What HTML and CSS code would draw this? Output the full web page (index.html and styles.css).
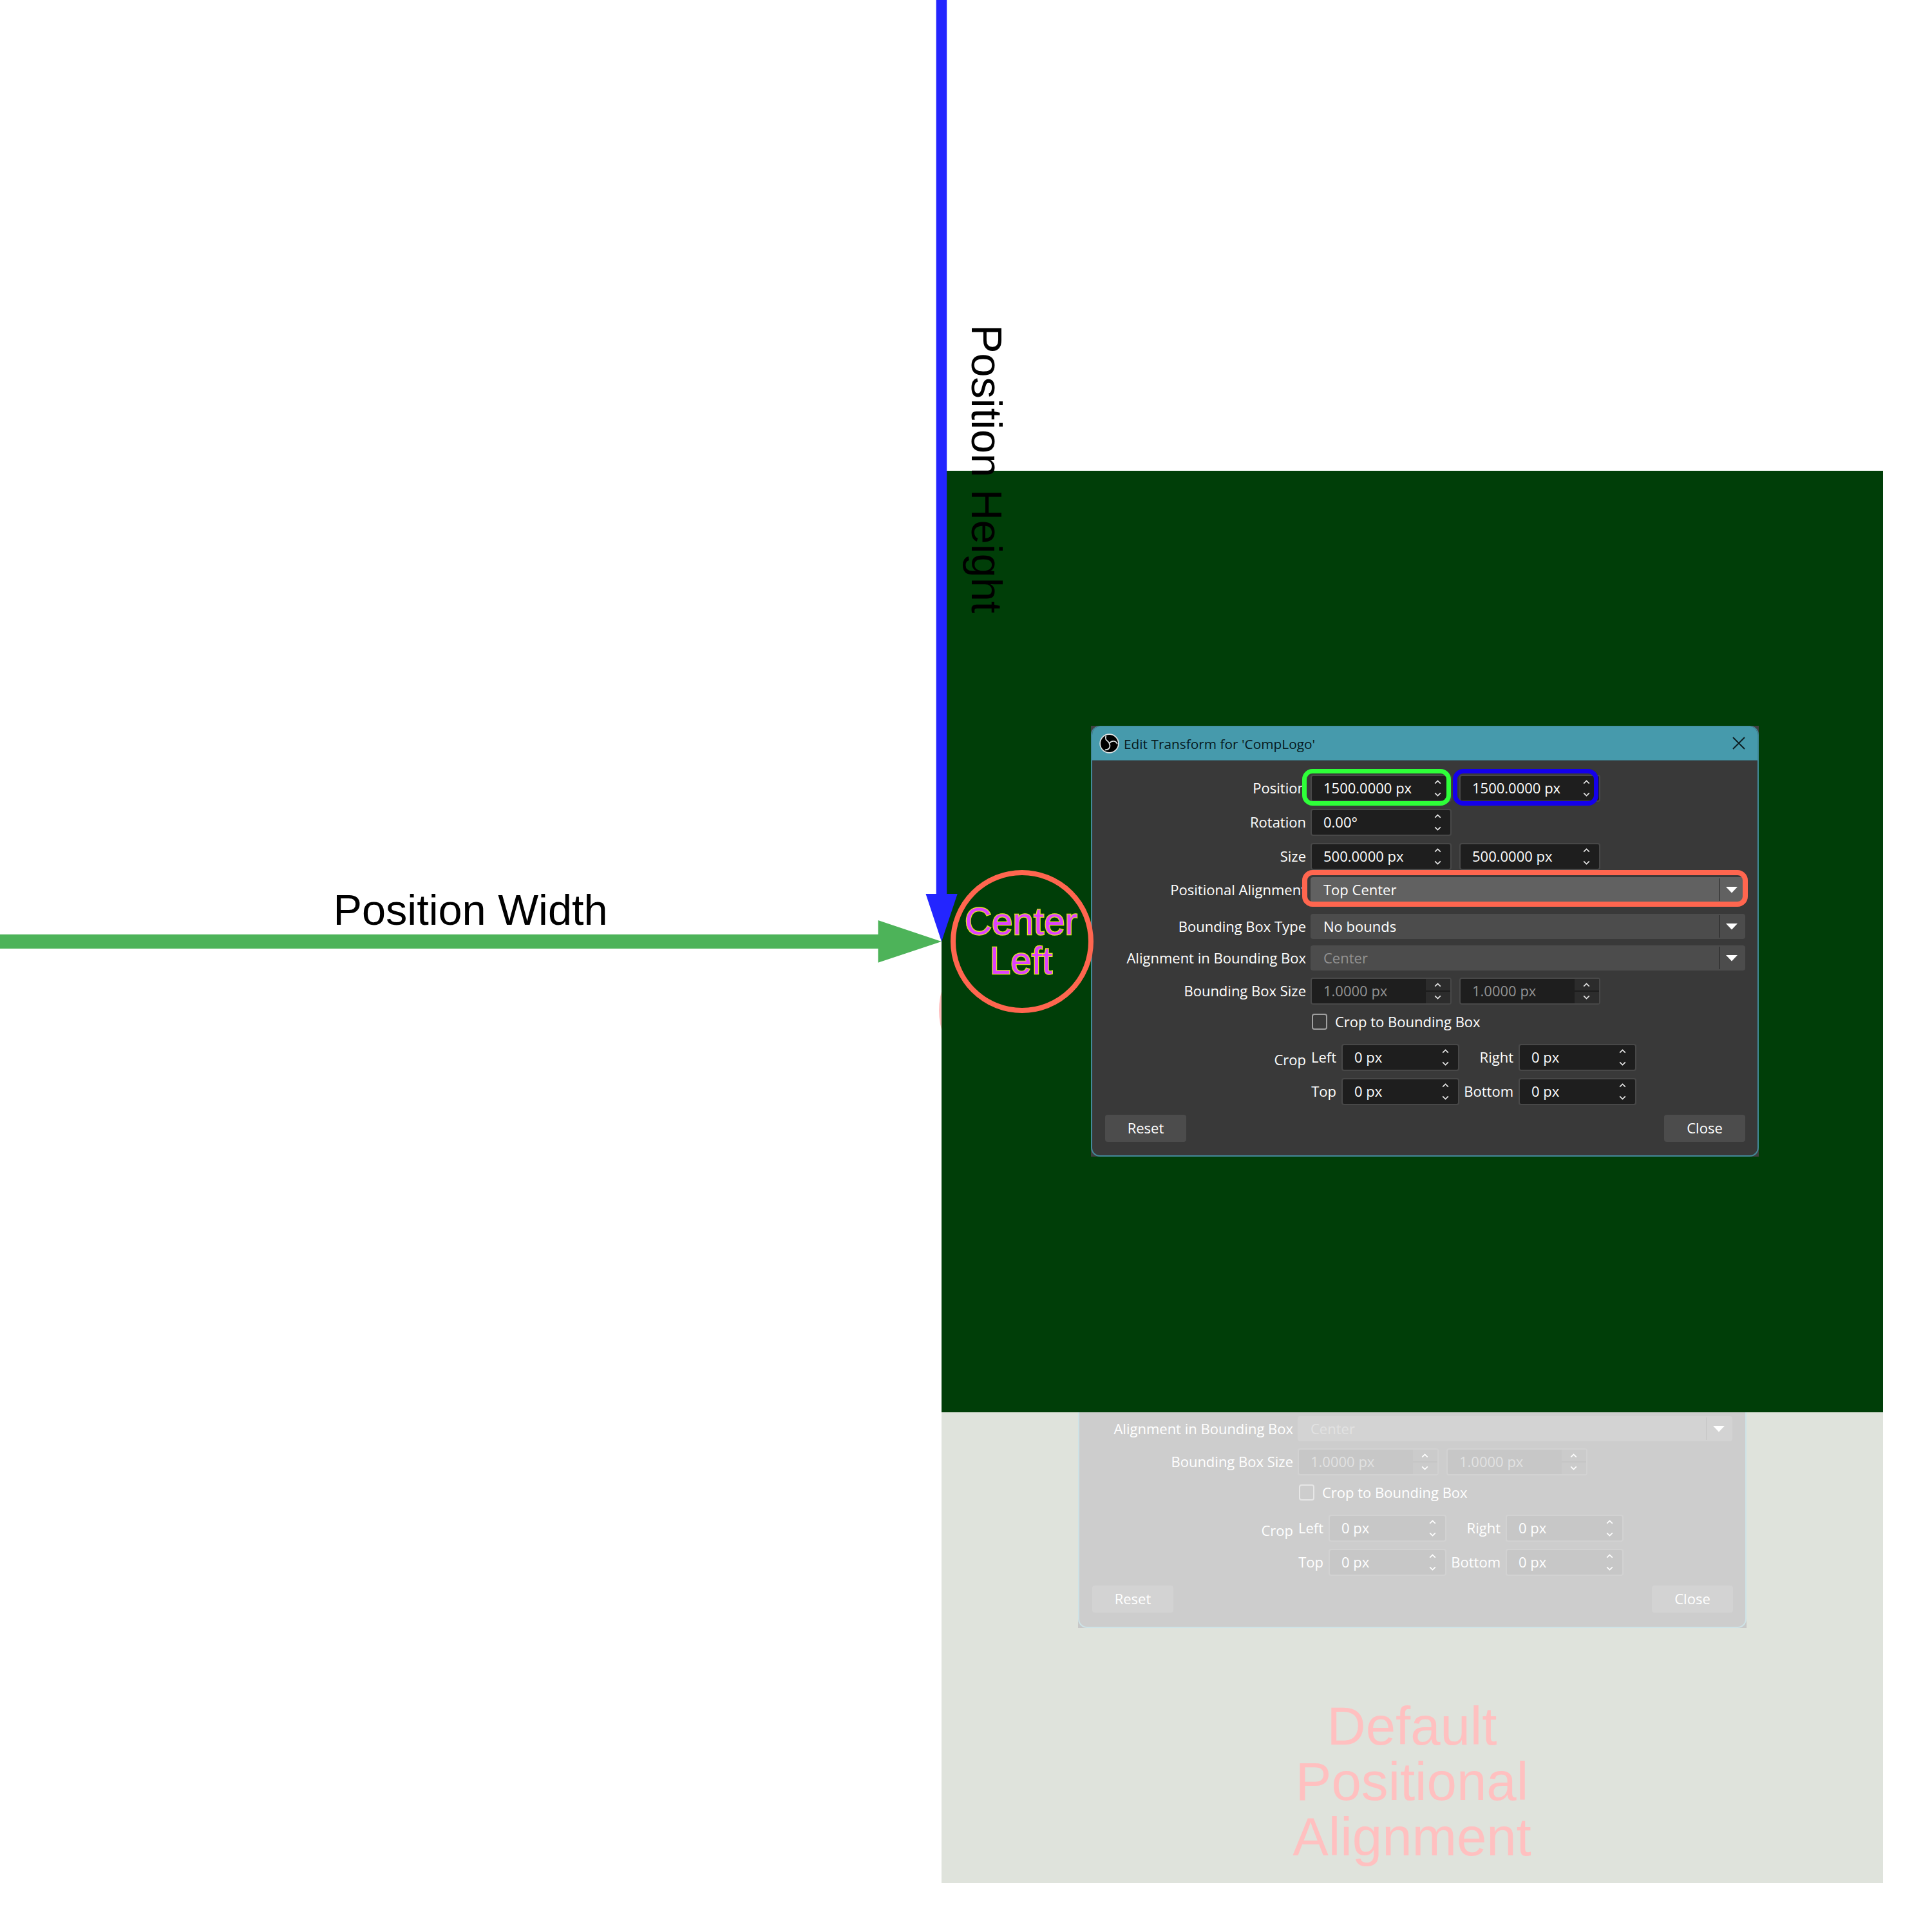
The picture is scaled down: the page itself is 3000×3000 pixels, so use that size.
FILE: index.html
```html
<!DOCTYPE html>
<html lang="en">
<head>
<meta charset="utf-8">
<title>Edit Transform: Center Left</title>
<link rel="stylesheet" href="styles.css">
</head>
<body>
<svg class="symbols" width="0" height="0" aria-hidden="true">
  <symbol id="spin" viewBox="0 0 10 26">
    <path d="M0.7 5.6 5 1.4 9.3 5.6M0.7 20.4 5 24.6 9.3 20.4" fill="none" stroke="currentColor" stroke-width="1.7"/>
  </symbol>
  <symbol id="drop" viewBox="0 0 18 10">
    <path d="M0 0H18L9 9.5Z" fill="#fff"/>
  </symbol>
</svg>
<main class="canvas">
  <div class="ring ring-faint"></div>

  <section class="panel panel-faint">
    <div class="shell shell-faint">
      <div class="dialog dialog-faint">
        <div class="form">
          <div class="row row-box-align"><span class="label">Alignment in Bounding Box</span><span class="combo off">Center<svg class="drop"><use href="#drop"/></svg></span></div>
          <div class="row row-box-size"><span class="label">Bounding Box Size</span><span class="field off">1.0000 px<i class="steps"></i><svg class="spin"><use href="#spin"/></svg></span><span class="field off">1.0000 px<i class="steps"></i><svg class="spin"><use href="#spin"/></svg></span></div>
          <div class="row row-check"><span class="label"></span><span class="check"></span><span class="check-text">Crop to Bounding Box</span></div>
          <div class="row row-crop"><span class="label low">Crop</span><span class="side">Left</span><span class="field small">0 px<svg class="spin"><use href="#spin"/></svg></span><span class="side wide">Right</span><span class="field small">0 px<svg class="spin"><use href="#spin"/></svg></span></div>
          <div class="row"><span class="label"></span><span class="side">Top</span><span class="field small">0 px<svg class="spin"><use href="#spin"/></svg></span><span class="side wide">Bottom</span><span class="field small">0 px<svg class="spin"><use href="#spin"/></svg></span></div>
          <div class="buttons"><span class="button">Reset</span><span class="button">Close</span></div>
        </div>
      </div>
    </div>
    <p class="default-text">Default<br>Positional<br>Alignment</p>
  </section>

  <section class="panel panel-main"></section>

  <div class="shell shell-main">
    <div class="dialog">
      <header class="titlebar">
        <svg class="logo" viewBox="-15 -15 30 30">
          <circle r="13.9" fill="#000" stroke="#dfe3e4" stroke-width="1.6"/>
          <path d="M0 0C-1 -4.5 -7.5 -4 -5 -11.5M0 0C3.5 -5 10 -4.500 12 1M0 0C2.500 5 -.5 10 -6.500 9.500" fill="none" stroke="#dfe3e4" stroke-width="1.7"/>
        </svg>
        <span class="title">Edit Transform for 'CompLogo'</span>
        <svg class="close" viewBox="0 0 20 20"><path d="M1 1 19 19M19 1 1 19" stroke="#0c1a1e" stroke-width="1.8"/></svg>
      </header>
      <div class="form">
        <div class="row row-position"><span class="label">Position</span><span class="field">1500.0000 px<svg class="spin"><use href="#spin"/></svg></span><span class="field">1500.0000 px<svg class="spin"><use href="#spin"/></svg></span></div>
        <div class="row"><span class="label">Rotation</span><span class="field">0.00°<svg class="spin"><use href="#spin"/></svg></span></div>
        <div class="row"><span class="label">Size</span><span class="field">500.0000 px<svg class="spin"><use href="#spin"/></svg></span><span class="field">500.0000 px<svg class="spin"><use href="#spin"/></svg></span></div>
        <div class="row row-align"><span class="label">Positional Alignment</span><span class="combo hover">Top Center<svg class="drop"><use href="#drop"/></svg></span></div>
        <div class="row row-box-type"><span class="label">Bounding Box Type</span><span class="combo">No bounds<svg class="drop"><use href="#drop"/></svg></span></div>
        <div class="row row-box-align"><span class="label">Alignment in Bounding Box</span><span class="combo off">Center<svg class="drop"><use href="#drop"/></svg></span></div>
        <div class="row row-box-size"><span class="label">Bounding Box Size</span><span class="field off">1.0000 px<i class="steps"></i><svg class="spin"><use href="#spin"/></svg></span><span class="field off">1.0000 px<i class="steps"></i><svg class="spin"><use href="#spin"/></svg></span></div>
        <div class="row row-check"><span class="label"></span><span class="check"></span><span class="check-text">Crop to Bounding Box</span></div>
        <div class="row row-crop"><span class="label low">Crop</span><span class="side">Left</span><span class="field small">0 px<svg class="spin"><use href="#spin"/></svg></span><span class="side wide">Right</span><span class="field small">0 px<svg class="spin"><use href="#spin"/></svg></span></div>
        <div class="row"><span class="label"></span><span class="side">Top</span><span class="field small">0 px<svg class="spin"><use href="#spin"/></svg></span><span class="side wide">Bottom</span><span class="field small">0 px<svg class="spin"><use href="#spin"/></svg></span></div>
        <div class="buttons"><span class="button">Reset</span><span class="button">Close</span></div>
      </div>
    </div>
  </div>

  <div class="mark mark-x"></div>
  <div class="mark mark-y"></div>
  <div class="mark mark-align"></div>

  <svg class="arrows" viewBox="0 0 3000 3000">
    <path d="M0 1451H1363.500V1429L1462 1462 1363.500 1494.700V1473H0Z" fill="#4db359"/>
    <path d="M1453.700 0H1470.200V1388H1486.700L1462 1462 1437.500 1388H1453.700Z" fill="#2325ff"/>
    <g class="arrow-text">
      <text x="517.500" y="1436">Position Width</text>
      <text transform="translate(1508.800 504) rotate(90)">Position Height</text>
    </g>
    <g class="ring-text">
      <text x="1585.500" y="1451">Center</text>
      <text x="1585.500" y="1511.500">Left</text>
    </g>
  </svg>
  <div class="ring ring-main"></div>
</main>
</body>
</html>
```
FILE: styles.css
```css
* { box-sizing: border-box; }
body { margin: 0; background: #fff; }
.symbols { position: absolute; }
.canvas {
  position: relative;
  width: 3000px;
  height: 3000px;
  overflow: hidden;
  background: #fff;
  font-family: "Open Sans", "Noto Sans", sans-serif;
}

/* Squares on the canvas */
.panel { position: absolute; left: 1462px; width: 1462px; }
.panel-main { top: 731px; height: 1462px; background: #003e08; }
.panel-faint { top: 2193px; height: 731px; background: #dfe3dc; }
.default-text {
  position: absolute;
  left: 0;
  top: 445px;
  width: 1461px;
  margin: 0;
  text-align: center;
  color: #ffc0c0;
  font: 83.33px/86.2px "Liberation Sans", Arial, sans-serif;
}

/* Rings */
.ring { position: absolute; width: 222px; height: 222px; border-radius: 50%; }
.ring-main { left: 1476px; top: 1351px; border: 8px solid #ff664f; }
.ring-faint { left: 1458px; top: 1458px; border: 8px solid #ffc0c0; }

/* Dialog window */
.shell { position: absolute; width: 1037px; background: #404040; }
.shell-main { left: 1694px; top: 1127px; height: 669px; }
.shell-faint { left: 212px; top: 0; width: 1038px; height: 335px; background: #c8c8c8; }
.dialog {
  height: 100%;
  border: 2px solid #43899a;
  border-top-width: 1px;
  border-radius: 14px;
  overflow: hidden;
  background: #393939;
  color: #fff;
  font-size: 22px;
  line-height: 30px;
  white-space: nowrap;
}
.titlebar {
  display: flex;
  align-items: center;
  height: 53px;
  padding: 0 19px 0 11px;
  background: #469aac;
  border-bottom: 1px solid #3c7481;
}
.logo { width: 31px; height: 31px; }
.title { margin-left: 7px; padding-top: 2px; color: #06191d; font-size: 20.85px; }
.close { width: 20px; height: 20px; margin-left: auto; }

/* Form */
.form { display: flex; flex-direction: column; padding: 0 19px 0 20px; }
.row { display: flex; height: 42px; margin-top: 11px; }
.row-position { margin-top: 22px; }
.row-align, .row-box-type, .row-box-align { height: 39px; }
.row-box-type { margin-top: 18px; }
.row-box-align { margin-top: 10px; }
.row-check { height: 25px; margin-top: 14px; align-items: center; }
.row-crop { margin-top: 22px; }
.label {
  display: flex;
  align-items: center;
  justify-content: flex-end;
  width: 312px;
  margin-right: 7px;
  padding-bottom: 2px;
}
.low { padding-top: 7px; }
.field {
  position: relative;
  display: flex;
  align-items: center;
  width: 219px;
  margin-right: 12px;
  padding: 0 0 2px 18px;
  border: 2px solid #484848;
  border-radius: 4px;
  background: #1e1e1e;
}
.small { width: 183px; margin: 0; }
.spin { position: absolute; right: 14px; top: 6px; width: 11px; height: 26px; color: #e6e6e6; }
.steps {
  position: absolute;
  top: 0;
  right: 0;
  width: 38px;
  height: 38px;
  background: linear-gradient(#2c2c2c 18px, #1c1c1c 18px, #1c1c1c 20px, #2c2c2c 20px);
}
.combo {
  position: relative;
  display: flex;
  align-items: center;
  width: 675px;
  padding: 0 0 2px 20px;
  border-radius: 4px;
  background: #4c4c4c;
}
.combo::after {
  content: "";
  position: absolute;
  right: 40px;
  top: 2px;
  bottom: 2px;
  width: 1.5px;
  background: #1d1d1d;
}
.hover { background: #616161; }
.off { color: #939393; }
.drop { position: absolute; right: 12px; top: 15px; width: 18px; height: 10px; }
.check { width: 24px; height: 25px; margin-left: 2px; border: 2px solid #a0a0a0; border-radius: 4px; }
.check-text { margin-left: 12px; padding-bottom: 1px; }
.side {
  display: flex;
  align-items: center;
  justify-content: flex-end;
  width: 40px;
  margin-right: 8px;
  padding-bottom: 2px;
}
.wide { width: 84px; }
.buttons { display: flex; justify-content: space-between; height: 42px; margin-top: 15px; }
.button {
  display: flex;
  align-items: center;
  justify-content: center;
  width: 126px;
  padding-bottom: 3px;
  border-radius: 4px;
  background: #4c4c4c;
}

/* Faded copy of the dialog, cut off above */
.dialog-faint {
  background: #cdcdcd;
  border: 2px solid #cee3e7;
  border-top: 0;
  border-radius: 0 0 14px 14px;
}
.dialog-faint .form { padding-top: 6px; }
.dialog-faint .row-box-align { margin-top: 0; }
.dialog-faint .combo, .dialog-faint .button { background: #d3d3d3; }
.dialog-faint .combo::after { background: #c5c5c5; }
.dialog-faint .field { background: #c7c7c7; border-color: #d2d2d2; }
.dialog-faint .off { color: #e2e2e2; }
.dialog-faint .spin { color: #fff; }
.dialog-faint .steps { background: linear-gradient(#cbcbcb 18px, #c6c6c6 18px, #c6c6c6 20px, #cbcbcb 20px); }
.dialog-faint .check { border-color: #e7e7e7; }

/* Highlights over the fields */
.mark { position: absolute; border-style: solid; border-radius: 16px; }
.mark-x { left: 2022px; top: 1194px; width: 231px; height: 57px; border-color: #2eff39; border-width: 7px; }
.mark-y { left: 2256px; top: 1194px; width: 226px; height: 57px; border-color: #1400eb; border-width: 7px; }
.mark-align { left: 2022px; top: 1351px; width: 692px; height: 57px; border-color: #ff664f; border-width: 8px; }

/* Arrows and captions */
.arrows { position: absolute; left: 0; top: 0; width: 3000px; height: 3000px; font-family: "Liberation Sans", Arial, sans-serif; }
.arrow-text { font-size: 66.67px; fill: #000; }
.ring-text {
  font-size: 58.33px;
  text-anchor: middle;
  fill: #df40ff;
  stroke: #e4ea20;
  stroke-width: 2.4px;
  paint-order: stroke;
}
```
